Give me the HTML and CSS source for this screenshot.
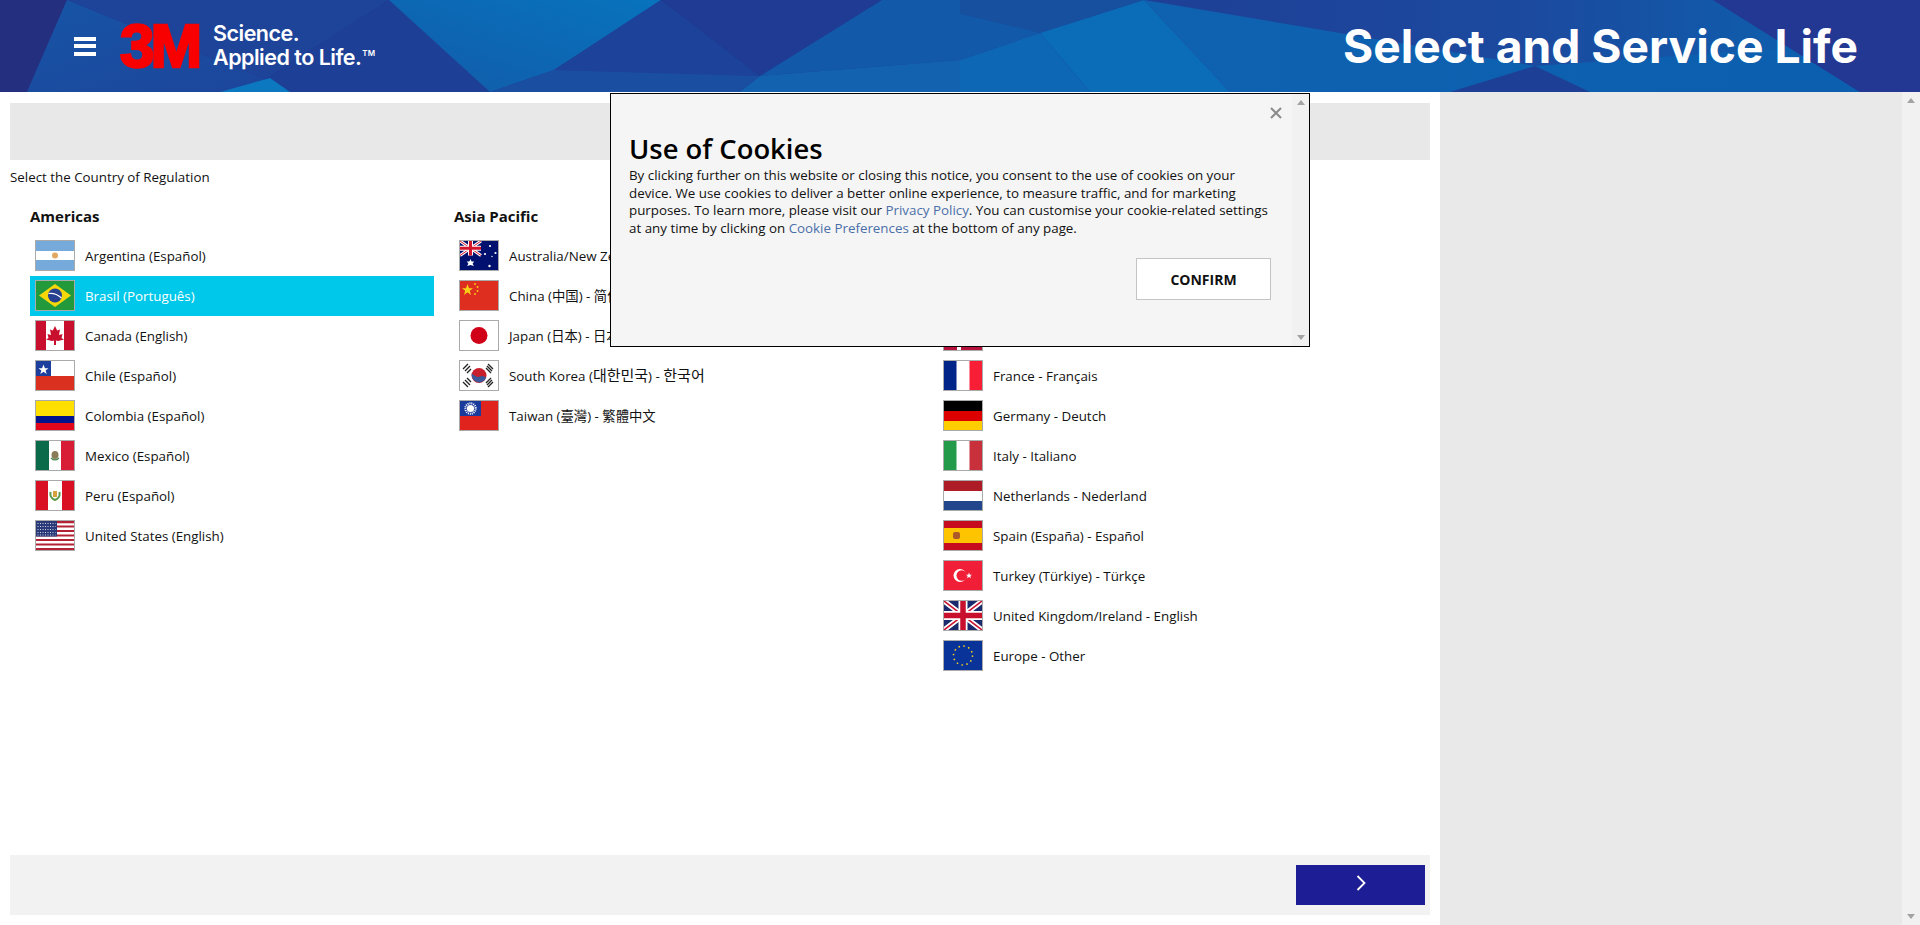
FILE: index.html
```html
<!DOCTYPE html>
<html lang="en">
<head>
<meta charset="utf-8">
<title>Select and Service Life</title>
<link rel="stylesheet" href="styles.css">
</head>
<body>
<header class="top">
  <svg class="top-art" viewBox="0 0 1920 92" preserveAspectRatio="none" aria-hidden="true">
    <defs>
      <linearGradient id="lightA" x1="0" y1="1" x2="1" y2="0"><stop offset="0" stop-color="#125ba9"/><stop offset="1" stop-color="#0873bd"/></linearGradient>
      <linearGradient id="right" x1="0" y1="0" x2="1" y2="0"><stop offset="0" stop-color="#1e3f96"/><stop offset="0.6" stop-color="#1b4a9f"/><stop offset="1" stop-color="#0f5dac"/></linearGradient>
      <linearGradient id="lower" x1="0" y1="0" x2="1" y2="0"><stop offset="0" stop-color="#0f62b0"/><stop offset="1" stop-color="#0c5fae"/></linearGradient>
      <linearGradient id="leftB" x1="0" y1="0" x2="1" y2="1"><stop offset="0" stop-color="#1655a6"/><stop offset="1" stop-color="#1d449a"/></linearGradient>
    </defs>
    <rect width="1920" height="92" fill="#213a92"/>
    <polygon points="0,0 67,0 27,92 0,92" fill="#24307f"/>
    <polygon points="67,0 27,92 300,92 190,50" fill="url(#leftB)"/>
    <polygon points="67,0 389,0 245,92 300,92 190,50" fill="#1d4499"/>
    <polygon points="389,0 245,92 490,92" fill="#1e3f96"/>
    <polygon points="270,78 220,92 290,92" fill="#0b78c0"/>
    <polygon points="389,0 661,0 554,70 490,92" fill="url(#lightA)"/>
    <polygon points="661,0 760,76 554,70" fill="#1d429a"/>
    <polygon points="661,0 882,0 760,76" fill="#1f3b93"/>
    <polygon points="882,0 960,0 1040,33 960,60 760,76" fill="#1259a9"/>
    <polygon points="554,70 760,76 740,92 490,92" fill="#1a4ea1"/>
    <polygon points="760,76 960,60 960,92 740,92" fill="#1262b0"/>
    <polygon points="960,0 1144,0 1040,33 960,14" fill="#17509f"/>
    <polygon points="1040,33 1144,0 1230,92 1090,92" fill="#0b6cb8"/>
    <polygon points="960,60 1040,33 1090,92 960,92" fill="#0e67b4"/>
    <polygon points="960,14 1040,33 960,60" fill="#1259a9"/>
    <polygon points="1144,0 1713,0 1860,92 1230,92" fill="url(#lower)"/>
    <polygon points="1144,0 1713,0 1790,48 1535,66" fill="url(#right)"/>
    <polygon points="1535,66 1450,92 1590,92" fill="#1e3f96"/>
    <polygon points="1713,0 1920,0 1920,92 1860,92" fill="#233892"/>
  </svg>
  <div class="brand">
    <button class="burger" aria-label="Menu"><span></span><span></span><span></span></button>
    <span class="logo">3M</span>
    <span class="slogan"><span>Science.</span><span>Applied to Life.<sup>TM</sup></span></span>
  </div>
  <h1 class="app-title">Select and Service Life</h1>
</header>

<div class="page">
  <main class="main">
    <div class="banner"></div>
    <p class="prompt">Select the Country of Regulation</p>
    <div class="regions">
      <section class="region">
        <h2>Americas</h2>
        <ul>
          <li><svg class="flag" viewBox="0 0 38 29" preserveAspectRatio="none"><rect width="38" height="29" fill="#fff"/><rect width="38" height="10" fill="#75aadb"/><rect y="19" width="38" height="10" fill="#75aadb"/><circle cx="19" cy="14.5" r="3" fill="#e0a860"/></svg>Argentina (Español)</li>
          <li class="selected"><svg class="flag" viewBox="0 0 38 29" preserveAspectRatio="none"><rect width="38" height="29" fill="#229a3c"/><polygon points="19,3 35,14.5 19,26 3,14.5" fill="#f6d80a"/><circle cx="19" cy="14.5" r="7" fill="#27408f"/><path d="M12.5 12.5q7 -1 13 4.500" fill="none" stroke="#fff" stroke-width="1.200"/></svg>Brasil (Português)</li>
          <li><svg class="flag" viewBox="0 0 38 29" preserveAspectRatio="none"><rect width="38" height="29" fill="#fff"/><rect width="10" height="29" fill="#c8102e"/><rect x="28" width="10" height="29" fill="#c8102e"/><polygon points="19,5 21.200,9.500 24,8.500 23,14 26.500,13 25.500,17 28,18.500 22,20 20,19.500 20,24 18,24 18,19.500 16,20 10,18.500 12.500,17 11.500,13 15,14 14,8.500 16.800,9.500" fill="#c8102e"/></svg>Canada (English)</li>
          <li><svg class="flag" viewBox="0 0 38 29" preserveAspectRatio="none"><rect width="38" height="15" fill="#fff"/><rect y="15" width="38" height="14" fill="#da3020"/><rect width="15" height="15" fill="#1c3f9e"/><polygon points="7.500,3.500 8.900,7.200 12.500,7.200 9.600,9.500 10.700,13 7.500,10.800 4.300,13 5.400,9.500 2.500,7.200 6.100,7.200" fill="#fff"/></svg>Chile (Español)</li>
          <li><svg class="flag" viewBox="0 0 38 29" preserveAspectRatio="none"><rect width="38" height="15" fill="#ffe000"/><rect y="15" width="38" height="7" fill="#02148c"/><rect y="22" width="38" height="7" fill="#e2061a"/></svg>Colombia (Español)</li>
          <li><svg class="flag" viewBox="0 0 38 29" preserveAspectRatio="none"><rect width="38" height="29" fill="#fff"/><rect width="13" height="29" fill="#0b6a4a"/><rect x="25" width="13" height="29" fill="#d81e36"/><ellipse cx="19" cy="14" rx="3.500" ry="4" fill="#8a7a55"/><path d="M15 17q4 4 8 0" fill="none" stroke="#4c8a58" stroke-width="1.200"/></svg>Mexico (Español)</li>
          <li><svg class="flag" viewBox="0 0 38 29" preserveAspectRatio="none"><rect width="38" height="29" fill="#fff"/><rect width="12" height="29" fill="#d91023"/><rect x="26" width="12" height="29" fill="#d91023"/><path d="M14.500 11q-1 6 4.500 8q5.500 -2 4.500 -8" fill="none" stroke="#5e9a4a" stroke-width="2"/><rect x="17" y="10" width="4" height="6" fill="#d9a03c"/></svg>Peru (Español)</li>
          <li><svg class="flag" viewBox="0 0 38 29" preserveAspectRatio="none"><rect width="38" height="29" fill="#fff"/><path d="M0 1.100h38M0 5.500h38M0 10h38M0 14.500h38M0 19h38M0 23.500h38M0 28h38" stroke="#b22234" stroke-width="2.200"/><rect width="21" height="15.500" fill="#2a3a78"/><path d="M1.500 2.500h18M1.500 5.500h18M1.500 8.500h18M1.500 11.500h18M1.500 14h18" stroke="#cfd3e6" stroke-width="1" stroke-dasharray="1 1.500"/></svg>United States (English)</li>
        </ul>
      </section>
      <section class="region">
        <h2>Asia Pacific</h2>
        <ul>
          <li><svg class="flag" viewBox="0 0 38 29" preserveAspectRatio="none"><rect width="38" height="29" fill="#00106e"/><path d="M0 0L21 14.500M21 0L0 14.500" stroke="#fff" stroke-width="3"/><path d="M0 0L21 14.500M21 0L0 14.500" stroke="#d2142c" stroke-width="1"/><path d="M10.500 0v14.500M0 7.250h21" stroke="#fff" stroke-width="5"/><path d="M10.500 0v14.500M0 7.250h21" stroke="#d2142c" stroke-width="3"/><polygon points="10.500,18 11.600,20.600 14.300,20.400 12.600,22.400 13.800,25 10.500,24 7.200,25 8.400,22.400 6.700,20.400 9.400,20.600" fill="#fff"/><circle cx="30" cy="5" r="1.100" fill="#fff"/><circle cx="35.500" cy="12" r="1.100" fill="#fff"/><circle cx="25" cy="13" r="1.100" fill="#fff"/><circle cx="29.500" cy="25" r="1.200" fill="#fff"/><circle cx="32" cy="15.500" r=".7" fill="#fff"/></svg>Australia/New Zealand - English</li>
          <li><svg class="flag" viewBox="0 0 38 29" preserveAspectRatio="none"><rect width="38" height="29" fill="#de2e20"/><polygon points="7.500,3 9,7.200 13,7.200 9.800,9.800 11,14 7.500,11.300 4,14 5.200,9.800 2,7.200 6,7.200" fill="#fbd116"/><circle cx="15" cy="3" r=".9" fill="#fbd116"/><circle cx="17.500" cy="6" r=".9" fill="#fbd116"/><circle cx="17.500" cy="10" r=".9" fill="#fbd116"/><circle cx="15" cy="13" r=".9" fill="#fbd116"/></svg>China (中国) - 简体中文</li>
          <li><svg class="flag" viewBox="0 0 38 29" preserveAspectRatio="none"><rect width="38" height="29" fill="#fff"/><circle cx="19" cy="14.500" r="8.500" fill="#d00018"/></svg>Japan (日本) - 日本語</li>
          <li><svg class="flag" viewBox="0 0 38 29" preserveAspectRatio="none"><rect width="38" height="29" fill="#fff"/><circle cx="19" cy="14.500" r="7.500" fill="#c9202e"/><path d="M11.800 12.500a7.500 7.500 0 0 0 14.400 4q-3 -2.500 -6.200 -1t-8.200 -3" fill="#3a5a9c"/><path d="M3 8l5 -5M5 10l5 -5M7 12l4 -4M28 3l5 5M27 5l5 5M26 7l5 5M3 21l5 5M5 19l5 5M7 17l4 4M28 26l5 -5M27 24l5 -5M26 22l5 -5" stroke="#222" stroke-width="1.300"/></svg><span>South Korea (<span class="hangul">대한민국</span>) - <span class="hangul">한국어</span></span></li>
          <li><svg class="flag" viewBox="0 0 38 29" preserveAspectRatio="none"><rect width="38" height="29" fill="#e0231c"/><rect width="21" height="15" fill="#1a3a9c"/><circle cx="10.500" cy="7.500" r="5.200" fill="none" stroke="#fff" stroke-width="2" stroke-dasharray="1 .9"/><circle cx="10.500" cy="7.500" r="3.600" fill="#fff"/></svg>Taiwan (臺灣) - 繁體中文</li>
        </ul>
      </section>
      <section class="region">
        <h2>Europe</h2>
        <ul>
          <li><svg class="flag" viewBox="0 0 38 29" preserveAspectRatio="none"><rect width="38" height="29" fill="#ed2939"/><rect y="10" width="38" height="9" fill="#fff"/></svg>Austria - Deutsch</li>
          <li><svg class="flag" viewBox="0 0 38 29" preserveAspectRatio="none"><rect width="13" height="29" fill="#000"/><rect x="13" width="12" height="29" fill="#fae042"/><rect x="25" width="13" height="29" fill="#ed2939"/></svg>Belgium - Français</li>
          <li><svg class="flag" viewBox="0 0 38 29" preserveAspectRatio="none"><rect width="38" height="29" fill="#b4123a"/><rect x="13" width="4" height="29" fill="#fff"/><rect y="12.500" width="38" height="4" fill="#fff"/></svg>Denmark - Dansk</li>
          <li><svg class="flag" viewBox="0 0 38 29" preserveAspectRatio="none"><rect width="38" height="29" fill="#fff"/><rect width="12.500" height="29" fill="#002488"/><rect x="25.500" width="12.500" height="29" fill="#f81e36"/></svg>France - Français</li>
          <li><svg class="flag" viewBox="0 0 38 29" preserveAspectRatio="none"><rect width="38" height="10" fill="#000"/><rect y="10" width="38" height="10" fill="#dd0000"/><rect y="20" width="38" height="9" fill="#ffce00"/></svg>Germany - Deutch</li>
          <li><svg class="flag" viewBox="0 0 38 29" preserveAspectRatio="none"><rect width="38" height="29" fill="#fff"/><rect width="12.500" height="29" fill="#229a4a"/><rect x="25.500" width="12.500" height="29" fill="#c8303c"/></svg>Italy - Italiano</li>
          <li><svg class="flag" viewBox="0 0 38 29" preserveAspectRatio="none"><rect width="38" height="10" fill="#ae1c28"/><rect y="10" width="38" height="10" fill="#fff"/><rect y="20" width="38" height="9" fill="#21468b"/></svg>Netherlands - Nederland</li>
          <li><svg class="flag" viewBox="0 0 38 29" preserveAspectRatio="none"><rect width="38" height="29" fill="#c60b1e"/><rect y="7" width="38" height="15" fill="#ffc400"/><rect x="9" y="11" width="7" height="7" rx="2" fill="#ad5a2a"/></svg>Spain (España) - Español</li>
          <li><svg class="flag" viewBox="0 0 38 29" preserveAspectRatio="none"><rect width="38" height="29" fill="#f01e36"/><circle cx="16" cy="14.500" r="6.500" fill="#fff"/><circle cx="17.700" cy="14.500" r="5.200" fill="#f01e36"/><polygon points="25,11.500 25.800,13.700 28,13.700 26.300,15.100 27,17.300 25,16 23,17.300 23.700,15.100 22,13.700 24.200,13.700" fill="#fff"/></svg>Turkey (Türkiye) - Türkçe</li>
          <li><svg class="flag" viewBox="0 0 38 29" preserveAspectRatio="none"><rect width="38" height="29" fill="#1a2a6c"/><path d="M0 0L38 29M38 0L0 29" stroke="#fff" stroke-width="5"/><path d="M0 0L38 29M38 0L0 29" stroke="#c8102e" stroke-width="1.500"/><path d="M19 0v29M0 14.500h38" stroke="#fff" stroke-width="9"/><path d="M19 0v29M0 14.500h38" stroke="#c8102e" stroke-width="5.500"/></svg>United Kingdom/Ireland - English</li>
          <li><svg class="flag" viewBox="0 0 38 29" preserveAspectRatio="none"><rect width="38" height="29" fill="#0a3399"/><circle cx="19" cy="14.500" r="9.500" fill="none" stroke="#ffd617" stroke-width="1.500" stroke-dasharray="1.500 3.480"/></svg>Europe - Other</li>
        </ul>
      </section>
    </div>
    <footer class="actions">
      <button class="next" aria-label="Next">
        <svg viewBox="0 0 10 16" width="10" height="16"><path d="M1.500 1L8.500 8L1.500 15" fill="none" stroke="#fff" stroke-width="1.800"/></svg>
      </button>
    </footer>
  </main>
  <aside class="side">
    <div class="scrollbar scrollbar-page"><i class="arrow-up"></i><i class="arrow-down"></i></div>
  </aside>
</div>

<div class="cookie" role="dialog">
  <div class="cookie-body">
    <button class="cookie-close" aria-label="Close">
      <svg viewBox="0 0 12 12" width="12" height="12"><path d="M1 1L11 11M11 1L1 11" stroke="#8a8a8a" stroke-width="2"/></svg>
    </button>
    <h2>Use of Cookies</h2>
    <p>By clicking further on this website or closing this notice, you consent to the use of cookies on your device. We use cookies to deliver a better online experience, to measure traffic, and for marketing purposes. To learn more, please visit our <a href="#">Privacy Policy</a>. You can customise your cookie-related settings at any time by clicking on <a href="#">Cookie Preferences</a> at the bottom of any page.</p>
    <div class="cookie-actions"><button class="confirm">CONFIRM</button></div>
  </div>
  <div class="scrollbar"><i class="arrow-up"></i><i class="arrow-down"></i></div>
</div>
</body>
</html>
```

FILE: styles.css
```css
* { box-sizing: border-box; }
html, body { height: 100%; margin: 0; }
body {
  overflow: hidden;
  display: flex;
  flex-direction: column;
  font-family: "Open Sans", "Noto Sans CJK SC", "Noto Sans CJK KR", sans-serif;
  font-size: 13.350px;
  color: #111;
  background: #fff;
}
button { border: 0; padding: 0; background: none; font: inherit; cursor: pointer; }
ul { list-style: none; margin: 0; padding: 0; }

.top {
  position: relative;
  flex: none;
  height: 92px;
  display: flex;
  align-items: center;
  justify-content: space-between;
  padding: 0 62px 0 74px;
  overflow: hidden;
  color: #fff;
}
.top-art { position: absolute; inset: 0; width: 100%; height: 100%; }
.brand { position: relative; display: flex; align-items: center; }
.burger { width: 22px; height: 19px; display: flex; flex-direction: column; justify-content: space-between; }
.burger span { height: 4px; background: #fff; }
.logo {
  margin-left: 24px;
  width: 81px;
  font-family: "Liberation Sans", sans-serif;
  font-weight: 700;
  font-size: 62px;
  line-height: 46px;
  letter-spacing: -4px;
  white-space: nowrap;
  color: #f80000;
  -webkit-text-stroke: 2.500px #f80000;
}
.slogan {
  display: flex;
  flex-direction: column;
  margin-left: 12px;
  padding-bottom: 2px;
  font-family: Inter, sans-serif;
  font-weight: 600;
  font-size: 21.500px;
  line-height: 24px;
  letter-spacing: -0.500px;
}
.slogan sup { font-size: 8px; line-height: 0; vertical-align: 9px; letter-spacing: 0; margin-left: 1px; }
.app-title {
  position: relative;
  margin: 0;
  font-family: Inter, sans-serif;
  font-weight: 700;
  font-size: 46.200px;
  line-height: 1;
  white-space: nowrap;
}

.page { flex: 1; min-height: 0; display: flex; }
.main {
  width: 1440px;
  flex: none;
  display: flex;
  flex-direction: column;
  padding: 11px 10px 10px;
}
.banner { height: 57px; flex: none; background: #e8e8e8; }
.prompt { margin: 8px 0 0; height: 19px; line-height: 19px; }
.regions {
  flex: 1;
  display: grid;
  grid-template-columns: 424px 484px 1fr;
  padding: 13px 0 0 20px;
}
.region h2 { margin: 0; height: 36px; font-size: 15px; line-height: 32px; font-weight: 700; color: #111; }
.region li {
  display: flex;
  align-items: center;
  gap: 10px;
  height: 40px;
  width: 404px;
  padding-left: 5px;
  line-height: 18px;
}
.region li.selected { background: #00c8ea; color: #fff; }
.flag { width: 40px; height: 31px; flex: none; border: 1px solid #aaa; margin-top: -1px; }
.hangul { font-size: 15px; line-height: 1; }

.actions {
  flex: none;
  height: 60px;
  display: flex;
  justify-content: flex-end;
  padding: 10px 5px 10px 0;
  background: #f2f2f2;
}
.next {
  width: 129px;
  height: 40px;
  display: flex;
  align-items: center;
  justify-content: center;
  padding-bottom: 4px;
  background: #1d1d95;
}

.side { flex: 1; display: flex; justify-content: flex-end; background: #e9e9e9; }
.scrollbar {
  width: 17px;
  flex: none;
  display: flex;
  flex-direction: column;
  justify-content: space-between;
  align-items: center;
  padding: 6px 0;
  background: #f1f1f1;
}
.scrollbar-page { width: 18px; }
.arrow-up, .arrow-down { width: 0; height: 0; border-left: 4.500px solid transparent; border-right: 4.500px solid transparent; }
.arrow-up { border-bottom: 5px solid #a3a3a3; }
.arrow-down { border-top: 5px solid #a3a3a3; }

.cookie {
  position: absolute;
  top: 93px;
  left: 610px;
  width: 700px;
  height: 254px;
  display: flex;
  border: 1px solid #000;
  background: #f5f5f5;
}
.cookie-body { position: relative; flex: 1; padding: 37px 18px 0; }
.cookie-close { position: absolute; top: 11px; right: 10px; width: 12px; height: 12px; display: block; }
.cookie h2 { margin: 0; font-size: 27.400px; line-height: 36px; font-weight: 600; color: #000; }
.cookie p { margin: 0; line-height: 17.700px; }
.cookie a { color: #4a6fa8; text-decoration: none; }
.cookie-actions { display: flex; justify-content: flex-end; margin-top: 20px; padding-right: 3px; }
.confirm {
  width: 135px;
  height: 42px;
  padding-top: 2px;
  border: 1px solid #c4c4c4;
  background: #fff;
  font-weight: 700;
  font-size: 14px;
  color: #111;
}
```
